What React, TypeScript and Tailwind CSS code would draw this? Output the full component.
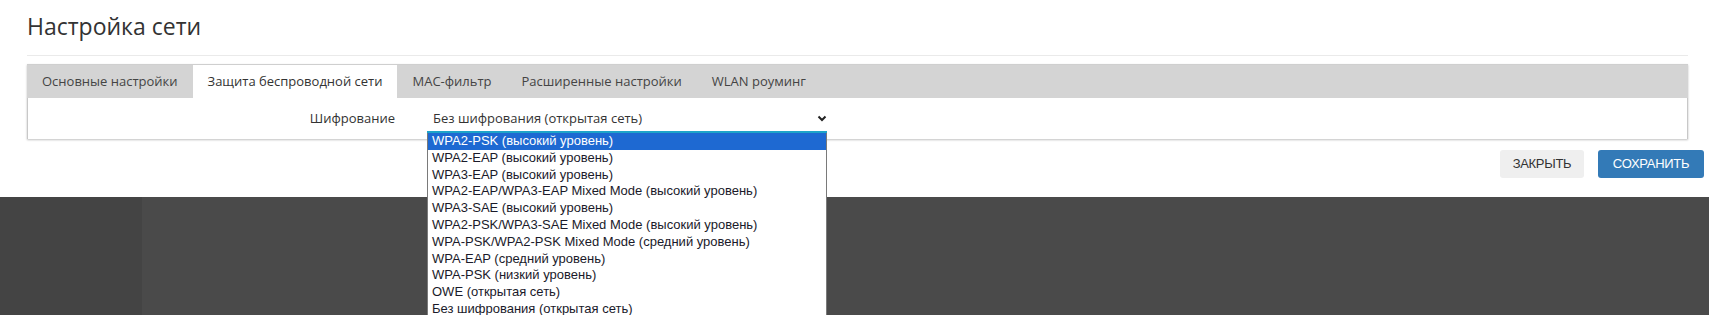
import React from 'react';

const tabs = ['Основные настройки', 'Защита беспроводной сети', 'MAC-фильтр', 'Расширенные настройки', 'WLAN роуминг'];

const options = [
  'WPA2-PSK (высокий уровень)',
  'WPA2-EAP (высокий уровень)',
  'WPA3-EAP (высокий уровень)',
  'WPA2-EAP/WPA3-EAP Mixed Mode (высокий уровень)',
  'WPA3-SAE (высокий уровень)',
  'WPA2-PSK/WPA3-SAE Mixed Mode (высокий уровень)',
  'WPA-PSK/WPA2-PSK Mixed Mode (средний уровень)',
  'WPA-EAP (средний уровень)',
  'WPA-PSK (низкий уровень)',
  'OWE (открытая сеть)',
  'Без шифрования (открытая сеть)',
];

export default function App() {
  const active = 1;

  return (
    <div className="relative h-[315px] w-full overflow-hidden bg-white font-['Open_Sans',sans-serif] text-[#333]">
      {/* Modal body */}
      <div className="pl-[27px] pr-[21px]">
        <h1 className="pt-[10px] text-[23px] leading-[33px] font-normal text-[#333]">Настройка сети</h1>
        <div className="mt-[12px] border-t border-[#eaeaea]" />

        <div className="mt-[8px] shadow-[0_1px_2px_rgba(0,0,0,0.25)]">
          {/* Tab bar */}
          <div className="flex h-[34px] bg-[#d4d4d4] border-t border-[#cfcfcf]">
            {tabs.map((t, i) => (
              <div
                key={t}
                className={`flex items-center px-[15px] text-[13px] ${i === active ? 'bg-white text-[#333]' : 'text-[#444]'}`}
              >
                {t}
              </div>
            ))}
          </div>

          {/* Panel */}
          <div className="flex h-[41px] items-center border-x border-[#c8c8c8] bg-white">
            <div className="w-[367px] text-right text-[13px] text-[#333]">Шифрование</div>
            <div className="ml-[33px] flex w-[399px] items-center justify-between pl-[5px] text-[13px] text-[#333]">
              <span>Без шифрования (открытая сеть)</span>
              <svg width="10" height="7" viewBox="0 0 10 7">
                <polyline points="1.5,1.5 5,5 8.5,1.5" fill="none" stroke="#222" strokeWidth="2" />
              </svg>
            </div>
          </div>
        </div>
      </div>

      {/* Footer buttons */}
      <div className="mt-[11px] flex justify-end gap-[14px] pr-[5px]">
        <button className="h-[28px] w-[84px] rounded-[3px] bg-[#efefef] font-['Liberation_Sans',sans-serif] text-[13px] tracking-[-0.3px] text-[#333]">
          ЗАКРЫТЬ
        </button>
        <button className="h-[28px] w-[106px] rounded-[3px] bg-[#337ab7] font-['Liberation_Sans',sans-serif] text-[13px] tracking-[-0.3px] text-white">
          СОХРАНИТЬ
        </button>
      </div>

      {/* Dark backdrop below the modal */}
      <div className="mt-[19px] flex h-[118px]">
        <div className="w-[142px] bg-[#444444]" />
        <div className="flex-1 bg-[#4a4a4a]" />
      </div>

      {/* Open select popup */}
      <div className="absolute left-[427px] top-[131px] w-[400px] border-t-2 border-[#1ea4c9] bg-white">
        <div className="border border-t-0 border-[#7a7a7a] font-['Liberation_Sans',sans-serif] text-[13px] text-[#1a1a2a]">
          {options.map((o, i) => (
            <div
              key={o}
              className={`h-[16.8px] pl-[4px] leading-[16.8px] ${i === 0 ? 'bg-[#1e69d2] text-white' : ''}`}
            >
              {o}
            </div>
          ))}
        </div>
      </div>
    </div>
  );
}
